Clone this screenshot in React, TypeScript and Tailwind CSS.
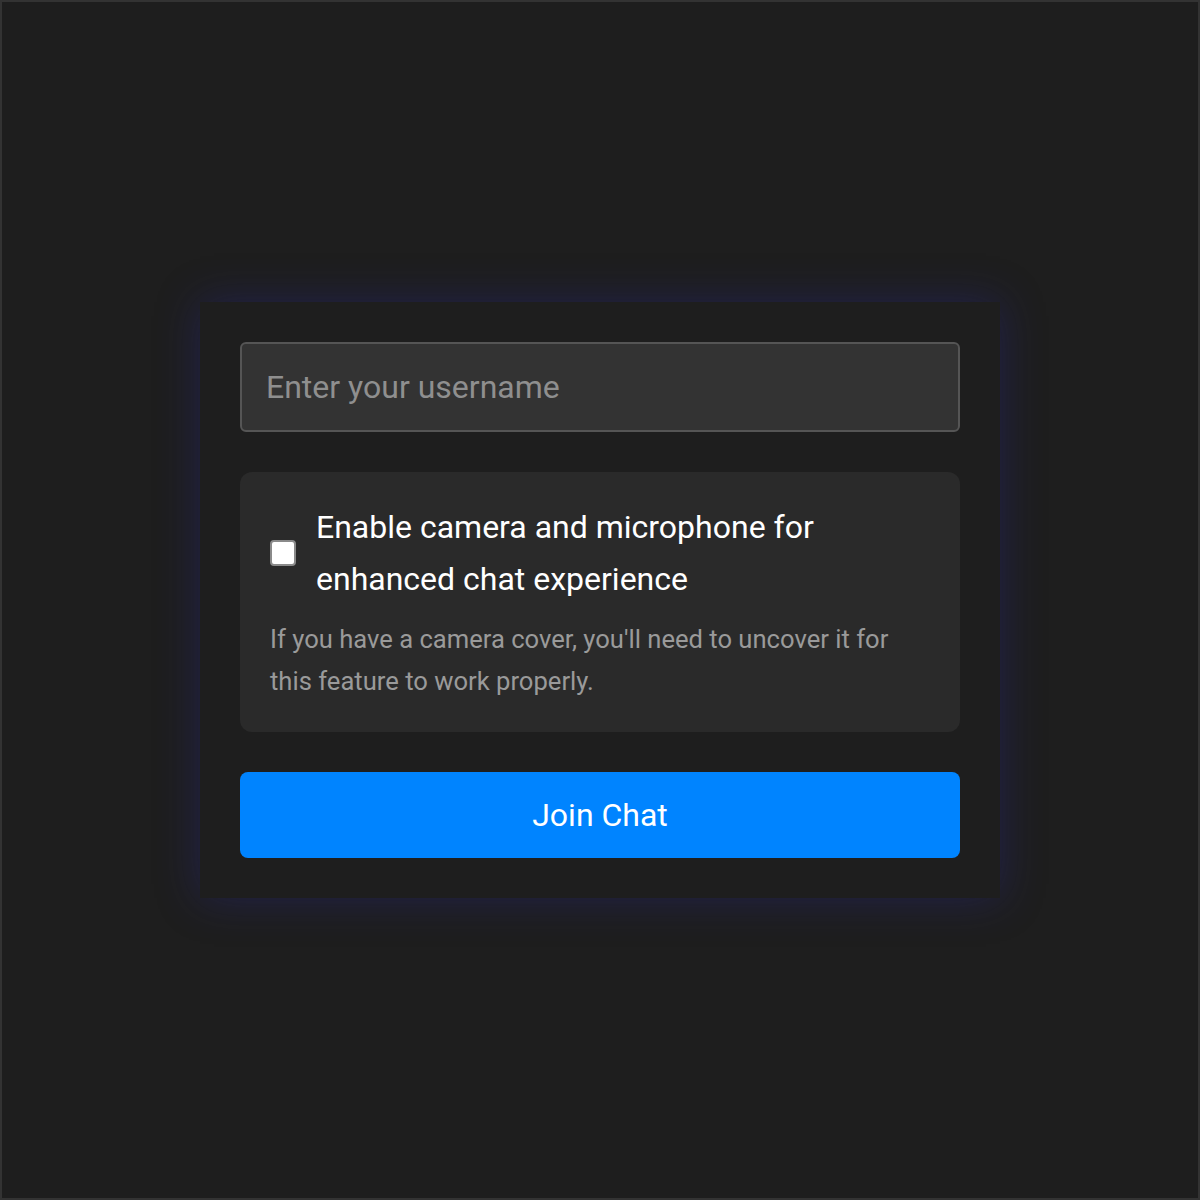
export default function App() {
  return (
    <div className="min-h-screen w-full flex items-center justify-center bg-[#1e1e1e] border-2 border-[#333333] font-['Roboto',_'Liberation_Sans',_sans-serif]">
      <div className="w-[800px] bg-[#1e1e1e] p-10 flex flex-col gap-10 shadow-[0_0_40px_rgba(40,40,150,0.38)]">
        <input
          type="text"
          placeholder="Enter your username"
          className="w-full h-[90px] rounded-md border-2 border-[#555555] bg-[#333333] px-6 text-[32px] text-white placeholder:text-[#8f8f8f] outline-none"
        />

        <div className="rounded-xl bg-[#2a2a2a] px-[30px] pt-[29px] pb-[30px]">
          <label className="flex items-center gap-5">
            <span className="w-[26px] h-[26px] shrink-0 rounded-[4px] bg-white border-2 border-[#8a8a8a]" />
            <span className="text-[32px] leading-[52px] text-white">
              Enable camera and microphone for
              <br />
              enhanced chat experience
            </span>
          </label>
          <p className="mt-[13px] text-[25.6px] leading-[42px] text-[#9a9a9a]">
            If you have a camera cover, you'll need to uncover it for
            <br />
            this feature to work properly.
          </p>
        </div>

        <button className="w-full h-[86px] rounded-lg bg-[#0084ff] text-white text-[32px]">
          Join Chat
        </button>
      </div>
    </div>
  )
}
